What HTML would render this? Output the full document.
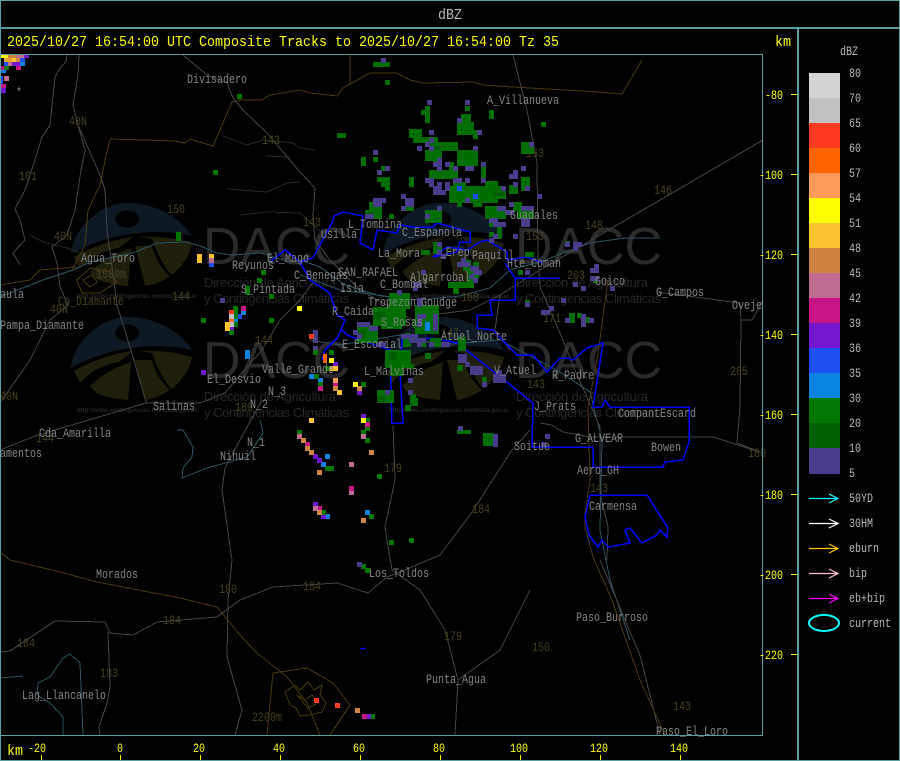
<!DOCTYPE html>
<html><head><meta charset="utf-8"><title>dBZ</title>
<style>
html,body{margin:0;padding:0;background:#000;width:900px;height:761px;overflow:hidden}
svg{display:block}
text{font-family:"Liberation Mono","DejaVu Sans Mono",monospace;white-space:pre}
.l text,.b text,.y text,.s text{font-size:13px;transform-box:fill-box;transform-origin:0 0;transform:scaleX(.77)}
.l text{fill:#858585}
.b text{fill:#46411f}
.y text{fill:#ffff00}
.s text{fill:#b8b8b8}
.h{font-size:15px;transform-box:fill-box;transform-origin:0 0;transform:scaleX(.889)}
.w text{fill:#272727;font-family:"Liberation Sans",sans-serif;font-size:13px}
.u text{fill:#282828;font-family:"Liberation Sans",sans-serif;font-size:6px;font-weight:bold}
.d text{fill:#2a2a2a;font-family:"Liberation Sans",sans-serif;font-size:52px}
.c path{fill:none;stroke-width:5;shape-rendering:crispEdges}
.n path{fill:none;stroke-width:1;shape-rendering:crispEdges}
</style></head><body>
<svg width="900" height="761" viewBox="0 0 900 761" xmlns="http://www.w3.org/2000/svg">
<defs><g id="lg">
<path fill="#0d1a26" fill-rule="evenodd" d="M0 51C2 25 30 0 56 0C85 0 110 15 121 33C90 25 40 28 0 51ZM44 16a12 8.500 0 1 0 24 0a12 8.500 0 1 0-24 0Z"/>
<path fill="#1f1f0c" d="M3 54C20 44 40 37 62 34L48 45C30 48 18 56 9 66Z"/>
<path fill="#1f1f0c" d="M19 69C30 58 45 50 60 45L57 83C45 82 35 80 25 76Z"/>
<path fill="#1f1f0c" d="M64 43L81 43C84 55 90 65 99 73C90 79 82 82 74 83Z"/>
<path fill="#1f1f0c" d="M68 34C85 33 105 35 121 40C120 48 115 60 101 72C93 65 86 50 81 36Z"/>
</g>
<g id="cells" class="c" transform="translate(0,.5)">
<path stroke="#483d8b" d="M381 60h4M427 102h4M465 102h4M457 120h4M429 132h4M477 132h4M429 140h4M425 144h4M417 148h4M429 148h4M473 148h4M529 144h4M373 152h4M437 160h4M433 164h8M445 164h4M481 164h4M385 168h4M437 168h4M453 168h4M465 168h8M521 168h4M377 172h4M513 172h4M509 176h8M425 180h8M453 180h8M465 180h4M481 180h4M429 184h4M437 184h4M445 184h4M513 184h4M433 188h8M445 188h4M501 188h4M525 188h4M433 192h8M441 192h4M401 196h4M537 196h4M373 200h12M405 200h8M465 200h4M373 204h8M405 204h8M509 204h4M401 208h4M437 208h4M497 208h8M521 208h12M505 212h8M365 216h8M425 216h4M489 220h8M521 220h8M521 224h8M493 224h12M493 236h4M513 236h4M489 240h4M437 244h4M437 252h4M441 256h4M461 260h4M457 264h12M470 268h8M421 272h4M473 272h8M469 276h4M473 280h4M413 284h8M413 288h4M397 292h4M417 300h4M417 304h4M417 316h8M417 320h4M417 324h4M433 320h4M433 324h4M433 328h4M433 316h4M401 336h16M409 340h16M417 344h4M429 344h4M441 344h8M357 324h12M369 328h8M357 336h4M377 344h8M353 332h4M408 380h4M408 392h4M385 392h4M458 428h4M465 364h4M458 356h8M458 360h8M470 368h12M470 372h12M482 384h4M493 376h12M493 380h12M497 372h4M549 308h4M541 312h8M565 320h4M573 284h4M561 300h4M581 316h4M581 320h4M581 324h4M589 320h4M581 288h4M525 272h4M525 304h4M565 244h4M573 244h8M573 248h4M610 288h4M590 270h8M594 266h4M590 278h8M545 436h4M541 444h4M493 436h4M493 440h4M493 444h4M313 332h4M313 336h4M313 340h4M313 348h4M220 300h4M357 564h4"/>
<path stroke="#7316d0" d="M201 372h4M333 364h4M357 392h4M313 456h4M317 460h4M361 416h4M313 504h4M321 516h4M366 716h4M229 328h4"/>
<path stroke="#0a84e0" d="M245 352h4M245 356h4M241 312h4M233 320h4M309 376h4M318 380h4M321 464h4M325 456h4M365 512h4M325 516h4M425 324h4M425 328h4"/>
<path stroke="#1e50f0" d="M209 264h4M237 316h4M457 188h4M473 196h4"/>
<path stroke="#007800" d="M233 308h4M233 312h4M233 316h4M233 324h4M229 332h4M201 320h4M269 320h4M313 352h4M314 376h4M318 384h4M245 288h4M245 292h4M261 272h4M257 280h4M269 296h4M176 234h4M176 238h4M237 96h4M213 172h4M297 432h4M325 468h8M321 512h4M369 516h4M365 420h4M365 428h4M361 432h4M365 440h4M377 476h4M389 542h4M409 540h4M361 566h4M365 570h4M370 716h4M361 384h4M329 352h4M325 368h4"/>
<path stroke="#fbc42f" d="M197 256h4M197 260h4M209 256h4M225 324h4M225 328h4M309 420h4M337 392h4M329 368h8"/>
<path stroke="#ffff00" d="M297 308h4M329 360h4M353 384h4M361 420h4"/>
<path stroke="#c06c90" d="M209 260h4M297 436h4M349 464h4M349 492h4M313 508h4M361 436h4"/>
<path stroke="#c71585" d="M241 308h4M305 444h4M317 508h4M349 488h4M365 424h4M318 388h4M333 384h4M362 716h4"/>
<path stroke="#cd853f" d="M301 440h4M305 448h4M309 452h4M317 472h4M317 512h4M361 520h4M369 452h4M333 388h4M357 388h4M355 710h4"/>
<path stroke="#ff3a20" d="M229 312h4M309 336h4M314 700h4M335 705h4"/>
<path stroke="#ff6400" d="M229 320h4M323 356h3M323 360h3"/>
<path stroke="#ff9a5a" d="M333 380h4"/>
<path stroke="#c0c0c0" d="M229 316h4M229 324h4"/>
</g></defs>
<rect width="900" height="761" fill="#000"/>

<use href="#lg" x="71" y="203"/><use href="#lg" x="383" y="203"/>
<use href="#lg" x="71" y="317"/><use href="#lg" x="383" y="317"/>
<g class="d">
<text x="203" y="264" textLength="147">DACC</text><text x="515" y="264" textLength="147">DACC</text>
<text x="203" y="378" textLength="147">DACC</text><text x="515" y="378" textLength="147">DACC</text>
</g>
<g class="w">
<text x="204" y="287" textLength="132">Dirección de Agricultura</text><text x="204" y="303" textLength="145">y Contingencias Climáticas</text>
<text x="516" y="287" textLength="132">Dirección de Agricultura</text><text x="516" y="303" textLength="145">y Contingencias Climáticas</text>
<text x="204" y="401" textLength="132">Dirección de Agricultura</text><text x="204" y="417" textLength="145">y Contingencias Climáticas</text>
<text x="516" y="401" textLength="132">Dirección de Agricultura</text><text x="516" y="417" textLength="145">y Contingencias Climáticas</text>
</g>
<g class="u">
<text x="77" y="298" textLength="120">http://www.contingencias.mendoza.gov.ar</text>
<text x="389" y="298" textLength="120">http://www.contingencias.mendoza.gov.ar</text>
<text x="77" y="412" textLength="120">http://www.contingencias.mendoza.gov.ar</text>
<text x="389" y="412" textLength="120">http://www.contingencias.mendoza.gov.ar</text>
</g>

<g class="n">
<path stroke="#1e2e1e" d="M223 136L247 145L263 140L293 143L300 148M265 156L290 157M227 189L267 192L287 183L300 182M240 215L267 212L300 213M30 235L43 242L67 248L80 253M300 148L315 150M300 213L330 240"/>
<path stroke="#2a5560" d="M0 297L43 280L73 270L90 262L133 253L157 243L187 242L203 247L217 253L233 255L260 253L290 262L300 260L320 267L345 285L380 296L420 300L460 296L490 288L510 270L540 262L590 243L625 238L660 238M300 275L340 290L400 298M310 340L340 345L400 335L440 345L500 340L560 372L590 392L602 440L600 530L610 580L630 640M177 430L183 430L193 447L192 457L183 468L182 478M260 420L263 433L247 457L207 468L182 478M63 658L70 654L80 663L83 735M63 658L50 677L38 683L37 695L50 703L63 717L63 735M0 678L23 676"/>
<path stroke="#444444" d="M67 55L66 62L60 68L55 77L52 105L50 125L42 137L35 160L25 190L15 209L20 220L25 240L13 253L20 265M79 55L78 75L73 105L78 125L85 150L81 170L75 210L67 235L52 247L57 263L60 287L68 305L50 320L30 360L0 403M78 125L100 175L105 190L107 230L117 305L133 357L146 402M0 450L35 436L146 403L200 403L225 393L240 375L262 350L280 320L300 300L315 280M183 55L207 75L227 83L233 98L243 110L267 133L300 172L315 188L313 215L315 240L330 260L360 290L395 310L430 330M513 55L527 110L537 163L538 257L540 287L560 333L575 370L600 427L600 493L608 527L607 560M763 140L600 235L540 270L500 295L470 310L430 315M657 292L740 303L741 320L752 320L763 300M741 320L740 407L737 443L760 452M540 423L552 425L563 432L590 437L713 437L760 452M232 560L228 600L227 657L242 710L235 735M0 652L10 651L55 621L105 622L110 633L133 635L157 622L217 617L240 600L273 587L337 583L368 593L387 577L400 572L440 555L470 515L512 450L530 430M108 632L110 687L107 703L99 727L100 735M393 425L395 480L385 527L387 540L392 570L420 590L445 630L458 680L455 735M530 590L500 650L458 680M600 560L625 620L640 655L660 735M500 295L495 330L510 350M262 400L240 440L225 468L222 490L232 560"/>
<path stroke="#4a3810" d="M110 139L175 141L185 143L190 139L213 146L220 130L232 102L240 100L262 100L270 95L300 90L310 93L337 96L343 88L370 73L397 73L410 80L423 83L473 82L483 85L513 87L598 92L622 94L642 60M350 55L350 85M110 139L105 160L100 185L88 210L85 245L72 270M0 285L30 280L40 270L77 267M10 560L60 572L97 582L180 598L217 607L240 635L257 653L287 677L307 703L320 735M608 280L597 360L588 407L590 480L585 513L585 527L593 557L612 600L640 680L665 735M267 735L273 673L307 668L333 683L350 705L330 735M285 692L295 685L300 690L308 682L314 690L322 685L320 695L326 703L322 712L310 715L300 716L296 708L290 705ZM297 695L305 700L312 695L318 703L308 708ZM77 280L90 268L110 272L117 282L100 293L82 293ZM83 280L92 275L97 282L90 287Z M0 552L10 560"/>
<path stroke="#0000ff" style="stroke-width:1.500" d="M270 262L285 250L300 262L313 258L317 250L332 223L334 216L343 212L363 216L360 243L373 250L377 230L397 233L400 225L413 227L433 227L437 223L470 232L470 242L460 242L457 252L433 257L447 247L467 250L480 242L487 240L507 252L507 260L527 257L543 263M300 262L310 280L330 293L337 315L345 320L338 337L325 350L322 360M342 330L347 335L360 340L390 350L392 423L403 423L400 373L402 340L433 338L457 343L470 353L533 403L532 447L593 447M515 278L505 263M515 278L515 300L490 300L492 315L477 315L477 328L493 330L517 355L533 355L547 372L560 358L568 358L573 360L587 348L603 343L593 407L602 407L605 400L610 407L689 407L689 442L683 460L665 462L663 467L593 467L593 450L592 446M515 278L560 278M590 495L647 495L668 528L667 537L660 530L657 535L642 543L630 528L625 530L630 543L608 547L602 540L598 547L589 535L585 517Z"/>
</g>

<g class="b">
<text x="69" y="125">40N</text><text x="19" y="180">101</text><text x="262" y="144">143</text><text x="167" y="213">150</text><text x="54" y="240">40N</text><text x="50" y="313">40N</text><text x="96" y="278">1500m</text><text x="255" y="344">144</text><text x="303" y="226">143</text><text x="526" y="157">153</text><text x="526" y="240">153</text><text x="654" y="194">146</text><text x="585" y="229">148</text><text x="567" y="279">203</text><text x="543" y="322">171</text><text x="441" y="337">147</text><text x="461" y="301">160</text><text x="527" y="388">143</text><text x="384" y="472">179</text><text x="472" y="513">184</text><text x="219" y="593">180</text><text x="303" y="590">184</text><text x="163" y="624">184</text><text x="17" y="647">184</text><text x="100" y="677">183</text><text x="252" y="721">2200m</text><text x="444" y="640">179</text><text x="532" y="651">150</text><text x="673" y="710">143</text><text x="730" y="375">205</text><text x="748" y="457">180</text><text x="590" y="492">143</text><text x="0" y="400">40N</text><text x="36" y="442">144</text><text x="172" y="300">144</text><text x="235" y="411">180</text><text x="58" y="305">Co_Diamante</text>
</g>

<!-- storm bodies -->
<path shape-rendering="crispEdges" fill="#006e00" stroke="#006e00" stroke-width="1" transform="translate(.5,.5)" d="M461 114h9v8h-9zM457 122h16v12h-16zM473 130h4v8h-4zM409 129h12v8h-12zM413 137h24v5h-24zM429 142h28v8h-28zM425 150h16v10h-16zM433 160h4v4h-4zM457 150h20v15h-20zM429 170h28v8h-28zM481 165h4v17h-4zM449 186h56v12h-56zM453 182h12v4h-12zM485 181h12v5h-12zM449 198h16v4h-16zM469 198h28v4h-28zM457 202h4v4h-4zM473 202h8v4h-8zM509 185h8v8h-8zM521 177h8v13h-8zM377 177h12v4h-12zM381 181h8v5h-8zM385 186h4v4h-4zM409 177h4v9h-4zM369 202h4v4h-4zM369 206h12v8h-12zM365 210h16v4h-16zM373 214h8v4h-8zM389 214h4v4h-4zM405 206h8v4h-8zM425 210h16v12h-16zM485 206h20v12h-20zM513 202h8v8h-8zM517 209h16v9h-16zM521 218h8v4h-8zM521 142h12v11h-12zM361 157h4v8h-4zM373 157h4v4h-4zM373 62h16v4h-16zM385 80h4v4h-4zM337 133h8v4h-8zM465 106h4v4h-4zM489 110h4v8h-4zM541 122h4v4h-4zM425 106h4v16h-4zM421 110h8v4h-8zM381 166h4v4h-4zM449 162h4v8h-4zM489 222h12v4h-12zM497 226h4v12h-4zM489 232h4v4h-4zM433 242h8v11h-8zM421 250h8v4h-8zM525 252h8v4h-8zM463 260h7v10h-7zM473 262h5v15h-5zM467 267h6v20h-6zM448 282h19v5h-19zM453 288h5v5h-5zM389 295h13v12h-13zM389 293h20v15h-20zM373 307h32v18h-32zM381 325h20v3h-20zM415 305h23v28h-23zM357 325h20v17h-20zM385 350h25v17h-25zM390 367h12v8h-12zM403 338h7v8h-7zM420 338h5v8h-5zM430 338h10v8h-10zM425 353h5v5h-5zM405 333h4v4h-4zM377 390h16v12h-16zM410 394h5v4h-5zM410 398h7v7h-7zM405 405h5v5h-5zM457 430h13v3h-13zM483 433h10v12h-10zM458 337h7v13h-7zM457 365h5v5h-5zM482 377h4v5h-4zM569 313h5v9h-5zM577 313h4v4h-4zM585 317h4v5h-4zM593 278h4v4h-4zM525 300h4v4h-4zM565 241h4v4h-4zM518 270h4v4h-4zM409 364h4v4h-4z"/>
<path shape-rendering="crispEdges" fill="#005c00" d="M373 312h12v8h-12zM365 212h8v2h-8zM433 146h8v4h-8zM493 192h12v4h-12zM437 206h4v4h-4zM413 320h8v8h-8zM357 330h8v8h-8zM389 352h8v8h-8zM377 396h8v6h-8z"/>

<use href="#cells"/><use href="#cells" x="1"/>

<g shape-rendering="crispEdges">
<rect x="1" y="55" width="7" height="3" fill="#ffff00"/><rect x="8" y="55" width="8" height="3" fill="#cd853f"/><rect x="16" y="55" width="8" height="3" fill="#c06c90"/><rect x="24" y="55" width="5" height="3" fill="#7316d0"/>
<rect x="4" y="58" width="8" height="4" fill="#e8a030"/><rect x="12" y="58" width="4" height="4" fill="#fbc42f"/><rect x="16" y="58" width="4" height="4" fill="#cd853f"/><rect x="20" y="58" width="5" height="4" fill="#1e50f0"/>
<rect x="4" y="62" width="4" height="4" fill="#1e50f0"/><rect x="8" y="62" width="4" height="4" fill="#c06c90"/><rect x="12" y="62" width="8" height="4" fill="#7316d0"/><rect x="20" y="62" width="5" height="4" fill="#0a84e0"/>
<rect x="1" y="66" width="3" height="4" fill="#c71585"/><rect x="4" y="66" width="5" height="4" fill="#007800"/><rect x="16" y="66" width="5" height="4" fill="#c71585"/>
<rect x="1" y="70" width="5" height="3" fill="#0a84e0"/><rect x="1" y="76" width="2" height="8" fill="#1e50f0"/><rect x="4" y="76" width="5" height="5" fill="#c06c90"/>
<rect x="1" y="84" width="5" height="4" fill="#c71585"/><rect x="1" y="88" width="5" height="5" fill="#7316d0"/>
</g>
<path fill="#0000ff" d="M360 648h3v-1h1v1h1v1h-1v1h-1v-1h-3z"/>

<g class="l">
<text x="187" y="83">Divisadero</text><text x="487" y="104">A_Villanueva</text><text x="510" y="219">Guadales</text><text x="348" y="228">L_Tombina</text><text x="321" y="238">Usilla</text><text x="402" y="236">C_Espanola</text><text x="378" y="257">La_Mora</text><text x="440" y="256">_Erep</text><text x="472" y="259">Paquill</text><text x="507" y="267">Hte_Coman</text><text x="595" y="285">Goico</text><text x="656" y="296">G_Campos</text><text x="732" y="309">Oveje</text><text x="81" y="262">Agua_Toro</text><text x="232" y="269">Reyunos</text><text x="267" y="262">El_Mago</text><text x="294" y="279">C_Benegas</text><text x="338" y="276">SAN_RAFAEL</text><text x="410" y="281">Algarrobal</text><text x="380" y="288">C_Bombal</text><text x="241" y="293">S_Pintada</text><text x="340" y="292">Isla</text><text x="332" y="315">R_Caida</text><text x="368" y="306">Tropezon</text><text x="421" y="306">Goudge</text><text x="381" y="326">S_Rosas</text><text x="342" y="348">E_Escorial</text><text x="441" y="340">Atuel_Norte</text><text x="364" y="375">L_Malvinas</text><text x="494" y="374">V_Atuel</text><text x="552" y="379">R_Padre</text><text x="534" y="410">J_Prats</text><text x="618" y="417">CompantEscard</text><text x="575" y="442">G_ALVEAR</text><text x="651" y="451">Bowen</text><text x="514" y="450">Soitue</text><text x="577" y="474">Aero_GH</text><text x="589" y="510">Carmensa</text><text x="576" y="621">Paso_Burroso</text><text x="656" y="735">Paso_El_Loro</text><text x="369" y="577">Los_Toldos</text><text x="426" y="683">Punta_Agua</text><text x="96" y="578">Morados</text><text x="22" y="699">Lag_Llancanelo</text><text x="220" y="460">Nihuil</text><text x="247" y="446">N_1</text><text x="250" y="408">N_2</text><text x="268" y="395">N_3</text><text x="207" y="383">El_Desvio</text><text x="262" y="373">Valle_Grande</text><text x="153" y="410">Salinas</text><text x="39" y="437">Cda_Amarilla</text><text x="0" y="457">amentos</text><text x="0" y="329">Pampa_Diamante</text><text x="0" y="298">aula</text><text x="16" y="96">*</text>
</g>

<g fill="#5f9ea0" shape-rendering="crispEdges">
<rect x="0" y="0" width="900" height="1"/><rect x="0" y="27" width="900" height="2"/>
<rect x="0" y="54" width="763" height="1"/><rect x="0" y="735" width="763" height="1"/>
<rect x="0" y="760" width="900" height="1"/><rect x="0" y="0" width="1" height="761"/>
<rect x="899" y="0" width="1" height="761"/><rect x="797" y="28" width="2" height="733"/>
<rect x="762" y="54" width="1" height="681"/>
</g>

<text class="h" x="438" y="19" fill="#b8b8b8">dBZ</text>
<text class="h" x="7" y="46" fill="#ffff00">2025/10/27 16:54:00 UTC Composite Tracks to 2025/10/27 16:54:00 Tz 35</text>
<text class="h" x="775" y="46" fill="#ffff00">km</text>
<text class="h" x="7" y="755" fill="#ffff00">km</text>

<g class="y">
<text x="765" y="99">-80</text><text x="759" y="179">-100</text><text x="759" y="259">-120</text><text x="759" y="339">-140</text><text x="759" y="419">-160</text><text x="759" y="499">-180</text><text x="759" y="579">-200</text><text x="759" y="659">-220</text>
<text x="28" y="752">-20</text><text x="117" y="752">0</text><text x="193" y="752">20</text><text x="273" y="752">40</text><text x="353" y="752">60</text><text x="433" y="752">80</text><text x="510" y="752">100</text><text x="590" y="752">120</text><text x="670" y="752">140</text>
</g>
<path stroke="#ffff00" stroke-width="1" shape-rendering="crispEdges" d="M791 94.500h6M791 174.500h6M791 254.500h6M791 334.500h6M791 414.500h6M791 494.500h6M791 574.500h6M791 654.500h6M41.500 755v5M120.500 755v5M200.500 755v5M280.500 755v5M360.500 755v5M440.500 755v5M520.500 755v5M600.500 755v5M680.500 755v5"/>

<g shape-rendering="crispEdges">
<rect x="809" y="73" width="31" height="25" fill="#d3d3d3"/>
<rect x="809" y="98" width="31" height="25" fill="#c0c0c0"/>
<rect x="809" y="123" width="31" height="25" fill="#ff3a20"/>
<rect x="809" y="148" width="31" height="25" fill="#ff6400"/>
<rect x="809" y="173" width="31" height="25" fill="#ff9a5a"/>
<rect x="809" y="198" width="31" height="25" fill="#ffff00"/>
<rect x="809" y="223" width="31" height="25" fill="#fbc42f"/>
<rect x="809" y="248" width="31" height="25" fill="#cd853f"/>
<rect x="809" y="273" width="31" height="25" fill="#c06c90"/>
<rect x="809" y="298" width="31" height="25" fill="#c71585"/>
<rect x="809" y="323" width="31" height="25" fill="#7316d0"/>
<rect x="809" y="348" width="31" height="25" fill="#1e50f0"/>
<rect x="809" y="373" width="31" height="25" fill="#0a84e0"/>
<rect x="809" y="398" width="31" height="25" fill="#007800"/>
<rect x="809" y="423" width="31" height="25" fill="#005f00"/>
<rect x="809" y="448" width="31" height="26" fill="#483d8b"/>
</g>
<g class="s">
<text x="840" y="55">dBZ</text>
<text x="849" y="77">80</text><text x="849" y="102">70</text><text x="849" y="127">65</text><text x="849" y="152">60</text><text x="849" y="177">57</text><text x="849" y="202">54</text><text x="849" y="227">51</text><text x="849" y="252">48</text><text x="849" y="277">45</text><text x="849" y="302">42</text><text x="849" y="327">39</text><text x="849" y="352">36</text><text x="849" y="377">35</text><text x="849" y="402">30</text><text x="849" y="427">20</text><text x="849" y="452">10</text><text x="849" y="477">5</text>
<text x="849" y="502">50YD</text><text x="849" y="527">30HM</text><text x="849" y="552">eburn</text><text x="849" y="577">bip</text><text x="849" y="602">eb+bip</text><text x="849" y="627">current</text>
</g>
<g fill="none" stroke-width="1.200">
<path stroke="#00ffff" d="M809 498.500H838M829 494L838 498.500L829 503"/>
<path stroke="#ffffff" d="M809 523.500H838M829 519L838 523.500L829 528"/>
<path stroke="#ffc800" d="M809 548.500H838M829 544L838 548.500L829 553"/>
<path stroke="#ffc0cb" d="M809 573.500H838M829 569L838 573.500L829 578"/>
<path stroke="#ff00ff" d="M809 598.500H838M829 594L838 598.500L829 603"/>
</g>
<ellipse cx="824" cy="623" rx="15" ry="8" fill="none" stroke="#00ffff" stroke-width="2"/>
</svg>
</body></html>
